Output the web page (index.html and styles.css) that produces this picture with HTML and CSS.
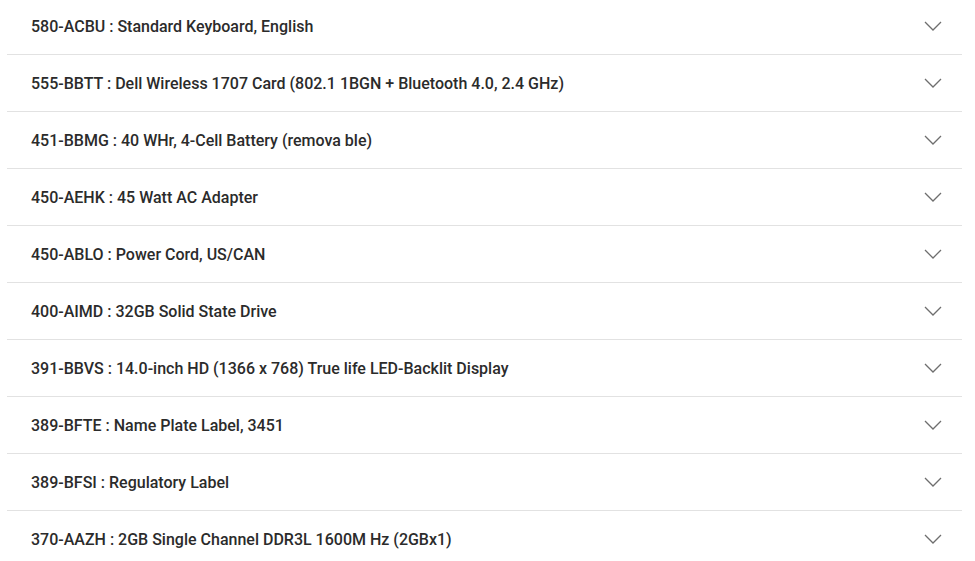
FILE: index.html
```html
<!DOCTYPE html>
<html>
<head>
<meta charset="utf-8">
<link rel="stylesheet" href="styles.css">
</head>
<body>
<div class="list">
  <div class="row"><span class="label">580-ACBU : Standard Keyboard, English</span><svg class="chev" viewBox="0 0 18 10"><path d="M1 1 L9 9 L17 1"/></svg></div>
  <div class="row"><span class="label">555-BBTT : Dell Wireless 1707 Card (802.1 1BGN + Bluetooth 4.0, 2.4 GHz)</span><svg class="chev" viewBox="0 0 18 10"><path d="M1 1 L9 9 L17 1"/></svg></div>
  <div class="row"><span class="label">451-BBMG : 40 WHr, 4-Cell Battery (remova ble)</span><svg class="chev" viewBox="0 0 18 10"><path d="M1 1 L9 9 L17 1"/></svg></div>
  <div class="row"><span class="label">450-AEHK : 45 Watt AC Adapter</span><svg class="chev" viewBox="0 0 18 10"><path d="M1 1 L9 9 L17 1"/></svg></div>
  <div class="row"><span class="label">450-ABLO : Power Cord, US/CAN</span><svg class="chev" viewBox="0 0 18 10"><path d="M1 1 L9 9 L17 1"/></svg></div>
  <div class="row"><span class="label">400-AIMD : 32GB Solid State Drive</span><svg class="chev" viewBox="0 0 18 10"><path d="M1 1 L9 9 L17 1"/></svg></div>
  <div class="row"><span class="label">391-BBVS : 14.0-inch HD (1366 x 768) True life LED-Backlit Display</span><svg class="chev" viewBox="0 0 18 10"><path d="M1 1 L9 9 L17 1"/></svg></div>
  <div class="row"><span class="label">389-BFTE : Name Plate Label, 3451</span><svg class="chev" viewBox="0 0 18 10"><path d="M1 1 L9 9 L17 1"/></svg></div>
  <div class="row"><span class="label">389-BFSI : Regulatory Label</span><svg class="chev" viewBox="0 0 18 10"><path d="M1 1 L9 9 L17 1"/></svg></div>
  <div class="row"><span class="label">370-AAZH : 2GB Single Channel DDR3L 1600M Hz (2GBx1)</span><svg class="chev" viewBox="0 0 18 10"><path d="M1 1 L9 9 L17 1"/></svg></div>
</div>
</body>
</html>
```
FILE: styles.css
```css
html, body {
  margin: 0;
  padding: 0;
  background: #fff;
  overflow: hidden;
}
.list {
  margin: -2px 13px 0 7px;
  font-family: Roboto, "Liberation Sans", sans-serif;
}
.row {
  height: 56px;
  border-bottom: 1px solid #e2e2e2;
  display: flex;
  align-items: center;
  justify-content: space-between;
  padding: 0 20px 0 24px;
}
.label {
  font-size: 16px;
  font-weight: 500;
  color: #2b2b2b;
}
.chev {
  width: 18px;
  height: 10px;
  fill: none;
  stroke: #6e6e6e;
  stroke-width: 1.3;
}
```
